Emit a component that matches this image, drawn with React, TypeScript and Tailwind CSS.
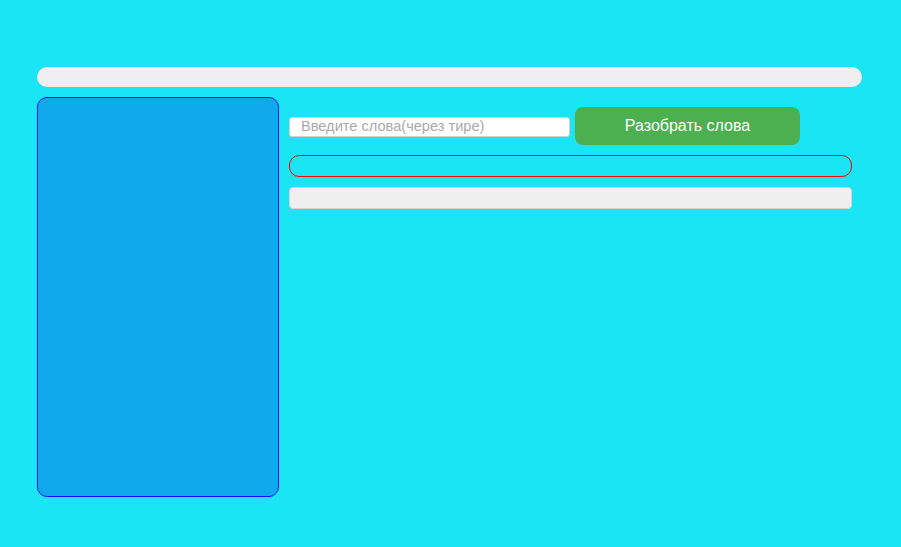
import React from "react";

export default function App() {
  return (
    <div
      className="min-h-screen w-full bg-[#1ae5f4] pt-[67px] pl-[37px]"
      style={{ fontFamily: '"Liberation Sans", Arial, sans-serif' }}
    >
      <div className="h-[20px] w-[825px] rounded-[10px] bg-[#efeff1]" />
      <div className="mt-[10px] flex">
        <div className="h-[400px] w-[242px] rounded-[10px] border border-[#1010ff] bg-[#0eaaeb]" />
        <div className="ml-[10px] flex w-[563px] flex-col">
          <div className="mt-[10px] flex items-start gap-[5px]">
            <input
              className="mt-[10px] h-[20px] w-[281px] rounded-[3px] border border-[#cfcfcf] bg-white px-[11px] text-[14.6px] text-black outline-none placeholder:text-[#a9a9a9]"
              placeholder="Введите слова(через тире)"
            />
            <button className="h-[38px] w-[225px] rounded-[8px] bg-[#4caf50] text-[16px] text-white">
              Разобрать слова
            </button>
          </div>
          <div className="mt-[10px] h-[22px] w-full rounded-[10px] border border-[#ff0000]" />
          <div className="mt-[10px] h-[22px] w-full rounded-[4px] border border-[#d4d4d4] bg-[#efefef]" />
        </div>
      </div>
    </div>
  );
}
